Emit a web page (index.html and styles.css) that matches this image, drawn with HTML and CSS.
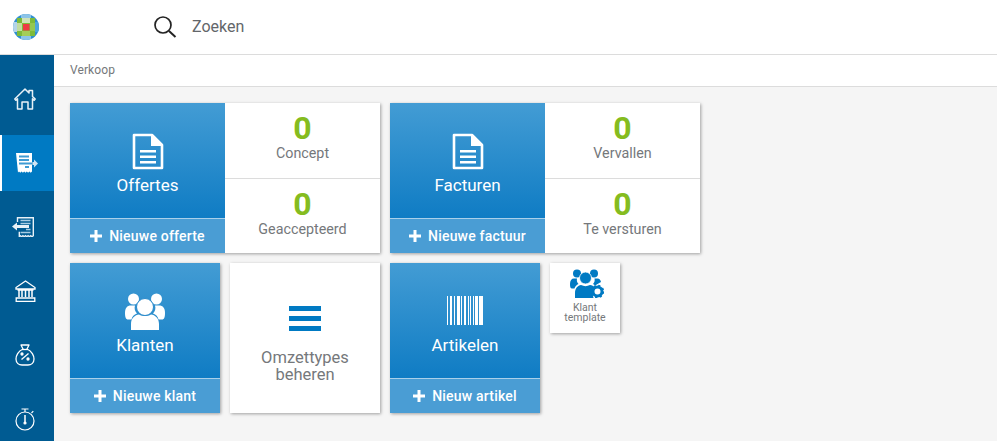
FILE: index.html
```html
<!DOCTYPE html>
<html lang="en">

<head>
  <meta charset="UTF-8">
  <meta name="viewport" content="width=device-width, initial-scale=1.0">
  <title>Verkoop</title>

  <link rel="stylesheet" href="styles.css">
</head>

<body>
  <svg class="defs" width="0" height="0">
    <symbol id="doc" viewBox="0 0 32 37">
      <path d="M2 2h18l10 10v23H2z" fill="none" stroke="#fff" stroke-width="2.600" stroke-linejoin="round"/>
      <path d="M19 2v11h11z" fill="#fff"/>
      <path d="M8 17h16v2.600H8zM8 22.500h16v2.600H8zM8 28h16v2.600H8z" fill="#fff"/>
    </symbol>
    <symbol id="plus" viewBox="0 0 12 12">
      <path d="M4.500 0h3v4.500h4.500v3H7.500v4.500h-3V7.500H0v-3h4.500z" fill="#fff"/>
    </symbol>
    <symbol id="people" viewBox="0 0 40 37">
      <circle cx="8.500" cy="6" r="5.500"/>
      <circle cx="31.500" cy="6" r="5.500"/>
      <path d="M0 20c0-5 2-7.500 6-7.500h4c-1 3 0 6 2 8-3 1-5 3-5.500 6H3c-2 0-3-2-3-6.500z"/>
      <path d="M40 20c0-5-2-7.500-6-7.500h-4c1 3 0 6-2 8 3 1 5 3 5.500 6H37c2 0 3-2 3-6.500z"/>
      <circle cx="20" cy="14" r="8.500" stroke="#2a8acb" stroke-width="1"/>
      <path d="M6 37v-6c0-6 4-9 8-9.500 3.500 2 8.500 2 12 0 4 .5 8 3.500 8 9.500v6z"/>
    </symbol>
  </svg>

  <header class="topbar">
    <svg class="logo" width="26" height="26" viewBox="0 0 26 26">
      <defs><clipPath id="globe"><circle cx="13" cy="13" r="13"/></clipPath></defs>
      <g clip-path="url(#globe)">
        <rect width="26" height="26" fill="#2f8fd0"/>
        <rect x="8" y="0" width="10" height="26" fill="#8cc4e8"/>
        <rect x="0" y="8" width="9" height="10" fill="#b4d4e8"/>
        <rect x="18" y="8" width="8" height="10" fill="#4da6dc"/>
        <rect x="4" y="4" width="18" height="18" fill="#7dbb3a"/>
        <rect x="9" y="4" width="8" height="5" fill="#cfe2b8"/>
        <rect x="4" y="9" width="5" height="8" fill="#c2dca0"/>
        <rect x="17" y="9" width="5" height="8" fill="#94c850"/>
        <rect x="9" y="17" width="8" height="5" fill="#a4cd58"/>
        <rect x="10" y="10" width="6.500" height="6.500" fill="#ee3a43"/>
      </g>
    </svg>
    <div class="search">
      <svg width="24" height="24" viewBox="0 0 24 24" fill="none" stroke="#232323">
        <circle cx="10" cy="10" r="8" stroke-width="1.700"/>
        <path d="M16 16l6.500 6" stroke-width="2"/>
      </svg>
      <span>Zoeken</span>
    </div>
  </header>

  <div class="main">
    <nav class="sidebar">
      <a class="nav-item">
        <svg width="22" height="22" viewBox="0 0 22 22" fill="none" stroke="#e8f1f7" stroke-width="1.500">
          <path d="M.8 11L11 1l4 4V2.500h3.500v6L21.200 11l-1 1.200L18.500 10.700V21H14v-7H8v7H3.500V10.700l-1.700 1.500z" stroke-linejoin="round"/>
        </svg>
      </a>
      <a class="nav-item active">
        <svg width="22" height="20" viewBox="0 0 22 20">
          <path d="M0 0h16v18.500l-1.300 1.200-1.300-1.200-1.300 1.200-1.300-1.200-1.300 1.200-1.300-1.200-1.300 1.200-1.300-1.200-1.300 1.200-1.300-1.200-1 1z" fill="#fff"/>
          <path d="M3 2.500h10v2H3zM3 6h10v2H3zM3 9.500h13.500v2H3zM9 13h4v2H9z" fill="#3f9bd3"/>
          <path d="M16.500 9h1.500V6.500l4 4-4 4V12h-1.500z" fill="#cfe4f3"/>
        </svg>
      </a>
      <a class="nav-item">
        <svg width="28" height="20" viewBox="0 0 28 20" fill="none" stroke="#e8f1f7">
          <path d="M6.500 5V.7h15.800v18l-1.300 1-1.300-1-1.300 1-1.300-1-1.300 1-1.300-1-1.300 1-1.300-1-1.300 1-1.300-1-1 1v-5" stroke-width="1.400"/>
          <path d="M9.500 3.500h10M9.500 6.500h10M15 12.500h4.500M9.500 15.500h10" stroke-width="1.700" stroke="#a9cde4"/>
          <path d="M18 8H6V5.500L1 9.500l5 4V11h12z" fill="#e8f1f7" stroke="none"/>
        </svg>
      </a>
      <a class="nav-item">
        <svg width="21" height="22" viewBox="0 0 21 22" fill="none" stroke="#fff" stroke-width="1.300">
          <path d="M10.500 1L1 7.500V9h19V7.500zM2.500 10h16"/>
          <path d="M4 10v7M7 10v7M10.500 10v7M14 10v7M17 10v7" stroke-width="1.500"/>
          <path d="M1.200 18h18.600v3.300H1.200z"/>
        </svg>
      </a>
      <a class="nav-item">
        <svg width="20" height="22" viewBox="0 0 20 22" fill="none" stroke="#fff" stroke-width="1.300">
          <path d="M6 1h8l-2 4c5 2 7 7 7 10 0 4-3 6-6 6H7c-3 0-6-2-6-6 0-3 2-8 7-10z" stroke-linejoin="round"/>
          <path d="M7 5.500h6"/>
          <path d="M6.500 15.500l7-6"/>
          <circle cx="7" cy="10" r="1" fill="#fff"/>
          <circle cx="13" cy="15" r="1" fill="#fff"/>
        </svg>
      </a>
      <a class="nav-item">
        <svg width="20" height="23" viewBox="0 0 20 23" fill="none" stroke="#fff" stroke-width="1.200">
          <circle cx="10" cy="13" r="9"/>
          <path d="M6.500 1h7M10 1v3M16.500 5l1.800-1.800"/>
          <path d="M10 7v8" stroke-width="1.500"/>
          <circle cx="10" cy="15" r="1" fill="#fff"/>
        </svg>
      </a>
    </nav>

    <div class="page">
      <div class="breadcrumb">Verkoop</div>
      <div class="content">
        <div class="tile-row">
          <div class="tile wide">
            <div class="tile-blue">
              <div class="tile-head">
                <svg class="icon-doc" width="32" height="37"><use href="#doc"/></svg>
                <span>Offertes</span>
              </div>
              <div class="tile-foot"><svg width="12" height="12"><use href="#plus"/></svg>Nieuwe offerte</div>
            </div>
            <div class="stats">
              <div class="stat"><b>0</b><span>Concept</span></div>
              <div class="stat"><b>0</b><span>Geaccepteerd</span></div>
            </div>
          </div>
          <div class="tile wide">
            <div class="tile-blue">
              <div class="tile-head">
                <svg class="icon-doc" width="32" height="37"><use href="#doc"/></svg>
                <span>Facturen</span>
              </div>
              <div class="tile-foot"><svg width="12" height="12"><use href="#plus"/></svg>Nieuwe factuur</div>
            </div>
            <div class="stats">
              <div class="stat"><b>0</b><span>Vervallen</span></div>
              <div class="stat"><b>0</b><span>Te versturen</span></div>
            </div>
          </div>
        </div>

        <div class="tile-row">
          <div class="tile square">
            <div class="tile-blue">
              <div class="tile-head">
                <svg class="icon-people" width="40" height="37"><use href="#people"/></svg>
                <span>Klanten</span>
              </div>
              <div class="tile-foot"><svg width="12" height="12"><use href="#plus"/></svg>Nieuwe klant</div>
            </div>
          </div>
          <div class="tile square plain">
            <div class="bars"><i></i><i></i><i></i></div>
            <span>Omzettypes<br>beheren</span>
          </div>
          <div class="tile square">
            <div class="tile-blue">
              <div class="tile-head">
                <svg class="icon-barcode" width="37" height="29" viewBox="0 0 37 29" fill="#fff">
                  <path d="M0 0h1v29H0zM3 0h2v29H3zM7 0h1v29H7zM10 0h3v29h-3zM14 0h1v29h-1zM17 0h2v29h-2zM21 0h1v29h-1zM23 0h1v29h-1zM26 0h1v29h-1zM28 0h3v29h-3zM32 0h4v29h-4z"/>
                </svg>
                <span>Artikelen</span>
              </div>
              <div class="tile-foot"><svg width="12" height="12"><use href="#plus"/></svg>Nieuw artikel</div>
            </div>
          </div>
          <div class="tile small">
            <svg width="34" height="29" viewBox="0 0 34 29">
              <g fill="#007ac3">
                <circle cx="7" cy="4.500" r="4"/>
                <circle cx="24" cy="4.500" r="4"/>
                <path d="M0 15c0-3.500 1.500-5.500 4-5.500h3c-.5 2 0 4 1.500 5.500-2 1-3.500 2.500-4 4.500H2c-1.500 0-2-1.500-2-4.500z"/>
                <path d="M31 13c-.5-2-1.500-3.500-3.500-3.500h-3c.5 2 0 4-1.500 5.500 1 .5 1.500 1 2 1.500z"/>
                <circle cx="15.500" cy="9" r="6" stroke="#fff" stroke-width=".8"/>
                <path d="M5 29v-5c0-5 3-7.500 6-8 3 1.500 6 1.500 9 0 2 .3 3.500 1.200 4.500 2.500-2 2.500-2.500 6-1 10.500z"/>
              </g>
              <circle cx="27.500" cy="22.500" r="4.500" fill="none" stroke="#007ac3" stroke-width="3"/>
              <circle cx="27.500" cy="22.500" r="6" fill="none" stroke="#007ac3" stroke-width="1.600" stroke-dasharray="2.200 2.510"/>
            </svg>
            <span>Klant<br>template</span>
          </div>
        </div>
      </div>
    </div>
  </div>
</body>

</html>
```

FILE: styles.css
```css
html, body {
  height: 100%;
}

body {
  font-family: Roboto, Arial, sans-serif;
  background-color: #f5f5f5;
  margin: 0;
  overflow: hidden;
  display: flex;
  flex-direction: column;
}

.defs {
  display: block;
  height: 0;
}

.topbar {
  background: white;
  height: 54px;
  flex-shrink: 0;
  border-bottom: 1px solid #dcdcdc;
  display: flex;
  align-items: center;
  padding-left: 13px;
}

.search {
  display: flex;
  align-items: center;
  gap: 15px;
  margin-left: 114px;
  font-size: 16px;
  color: #63666a;
}

.search span {
  margin-top: -2px;
}

.search svg {
  display: block;
}

.main {
  display: flex;
  flex: 1;
  min-height: 0;
}

.sidebar {
  background: #005b92;
  width: 54px;
  flex-shrink: 0;
  padding-top: 16px;
  display: flex;
  flex-direction: column;
  gap: 8px;
}

.nav-item {
  height: 56px;
  flex-shrink: 0;
  padding-right: 4px;
  display: flex;
  align-items: center;
  justify-content: center;
  box-sizing: border-box;
}

.nav-item.active {
  background: #007ac3;
  border-left: 2px solid white;
  padding-right: 2px;
}

.page {
  flex: 1;
  min-width: 0;
}

.breadcrumb {
  background: white;
  height: 31px;
  border-bottom: 1px solid #dcdcdc;
  padding-left: 16px;
  font-size: 12px;
  letter-spacing: 0.1px;
  line-height: 31px;
  color: #75787b;
}

.content {
  padding: 16px;
  display: flex;
  flex-direction: column;
  gap: 10px;
}

.tile-row {
  display: flex;
  gap: 10px;
}

.tile {
  display: flex;
  height: 150px;
  background: white;
  box-shadow: 1px 1px 3px rgba(0, 0, 0, 0.35);
}

.wide {
  width: 310px;
}

.square {
  width: 150px;
}

.tile-blue {
  width: 155px;
  display: flex;
  flex-direction: column;
  color: white;
}

.square .tile-blue {
  width: 150px;
}

.tile-head {
  height: 115px;
  background: linear-gradient(#439cd4, #0f7cc4);
  display: flex;
  flex-direction: column;
  align-items: center;
  justify-content: flex-end;
  padding-bottom: 23px;
  box-sizing: border-box;
  font-size: 17px;
  line-height: 20px;
}

.tile-head svg {
  display: block;
}

.icon-doc {
  margin-bottom: 5px;
}

.icon-people {
  margin-bottom: 5px;
  fill: white;
}

.icon-barcode {
  margin-bottom: 10px;
}

.tile-foot {
  height: 35px;
  background: #4a9dd4;
  border-top: 1px solid #a9d0ea;
  box-sizing: border-box;
  display: flex;
  align-items: center;
  justify-content: center;
  gap: 7px;
  font-size: 14px;
  letter-spacing: 0.2px;
  font-weight: 500;
}

.stats {
  flex: 1;
  display: flex;
  flex-direction: column;
}

.stat {
  height: 75px;
  box-sizing: border-box;
  display: flex;
  flex-direction: column;
  align-items: center;
  padding-top: 11px;
  font-size: 14.300px;
  line-height: 20px;
  color: #75787b;
}

.stat + .stat {
  border-top: 1px solid #dcdcdc;
}

.stat b {
  font-size: 32px;
  line-height: 29px;
  color: #85bc20;
}

.plain {
  flex-direction: column;
  align-items: center;
  font-size: 16.500px;
  line-height: 17px;
  text-align: center;
  color: #75787b;
  padding-top: 43px;
  box-sizing: border-box;
}

.bars {
  width: 32px;
  margin-bottom: 18px;
  display: flex;
  flex-direction: column;
  gap: 5px;
}

.bars i {
  display: block;
  height: 5px;
  background: #007ac3;
}

.small {
  width: 70px;
  height: 70px;
  flex-direction: column;
  align-items: center;
  padding-top: 6px;
  box-sizing: border-box;
  font-size: 10.500px;
  line-height: 10px;
  text-align: center;
  color: #75787b;
}

.small svg {
  margin: 0 0 5px 3px;
  flex-shrink: 0;
}
```
